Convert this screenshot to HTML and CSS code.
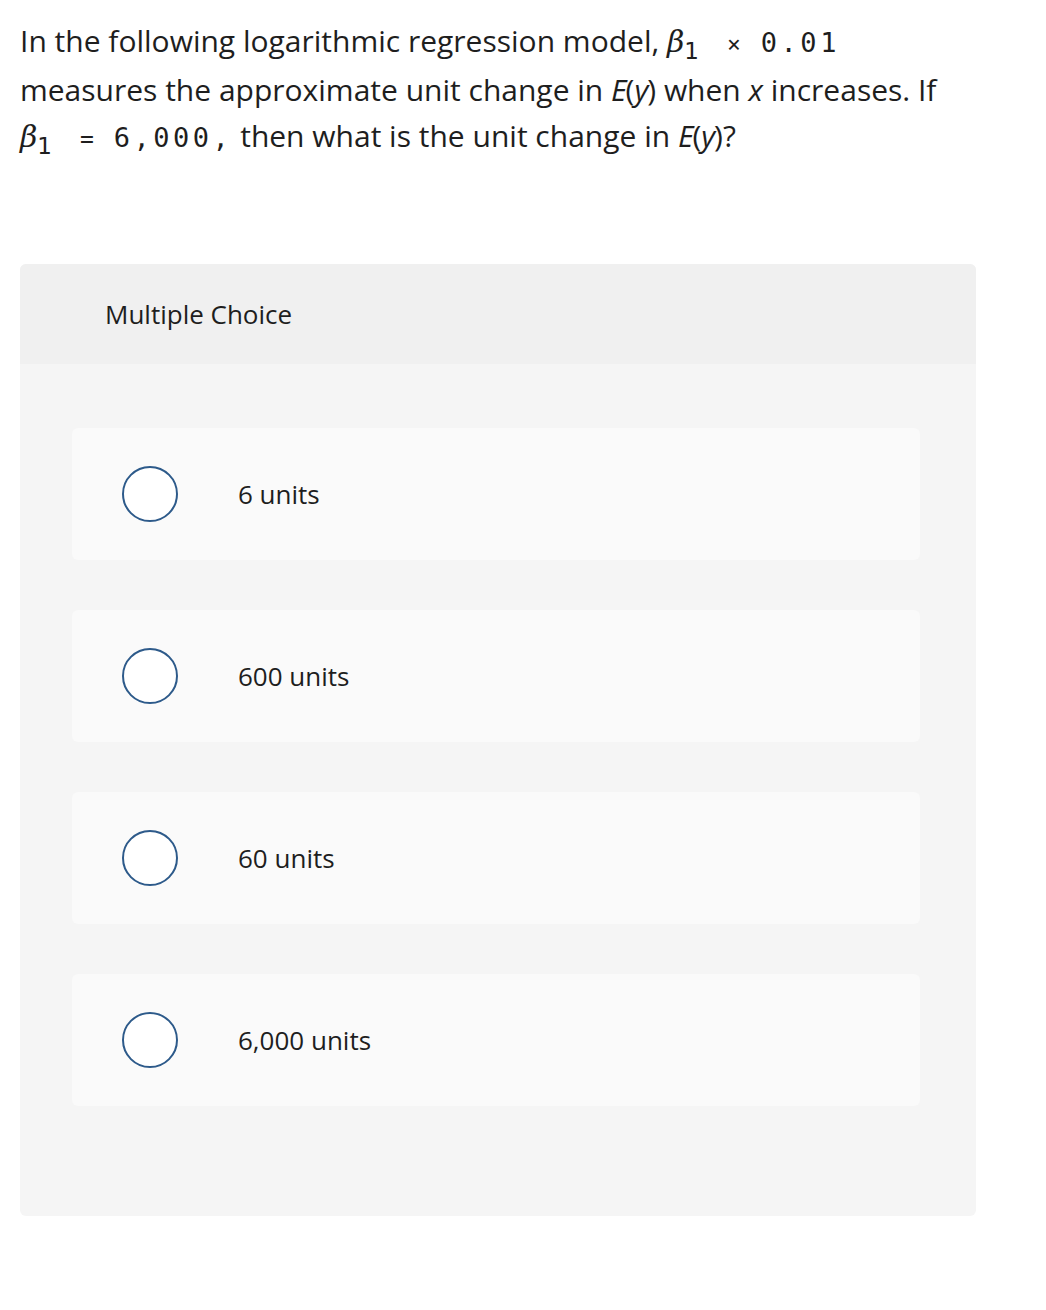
FILE: index.html
```html
<!DOCTYPE html>
<html>
<head>
<meta charset="utf-8">
<link rel="stylesheet" href="styles.css">
</head>
<body>
<div class="page">
  <p class="question">In the following logarithmic regression model, <span class="beta">β<sub>1</sub></span><span class="mono op">×</span><span class="mono">0.01</span><br>measures the approximate unit change in <i class="ey">E</i>(<i class="ey">y</i>) when <i>x</i> increases. If<br><span class="beta">β<sub>1</sub></span><span class="mono op">=</span><span class="mono">6,000,</span> then what is the unit change in <i class="ey">E</i>(<i class="ey">y</i>)?</p>
  <div class="panel">
    <div class="panel-head">Multiple Choice</div>
    <div class="panel-body">
      <div class="option"><span class="radio"></span><span class="label">6 units</span></div>
      <div class="option"><span class="radio"></span><span class="label">600 units</span></div>
      <div class="option"><span class="radio"></span><span class="label">60 units</span></div>
      <div class="option"><span class="radio"></span><span class="label">6,000 units</span></div>
    </div>
  </div>
</div>
</body>
</html>
```
FILE: styles.css
```css
html, body {
  margin: 0;
  padding: 0;
  background: #ffffff;
}
body {
  font-family: "Open Sans", "Lato", sans-serif;
  color: #1e1e1e;
}
.page {
  padding: 18px 70px 0 20px;
}
.question {
  margin: 0;
  font-size: 30px;
  line-height: 46px;
  white-space: nowrap;
}
.beta {
  font-family: "DejaVu Serif", serif;
  font-style: italic;
  font-size: 30px;
}
.beta sub {
  font-family: "DejaVu Sans", sans-serif;
  font-style: normal;
  font-size: 23px;
  vertical-align: -7px;
  line-height: 0;
}
.mono {
  font-family: "DejaVu Sans Mono", monospace;
  font-size: 27px;
  letter-spacing: 3.5px;
}
.op {
  font-size: 23px;
  letter-spacing: 0;
  margin: 0 20px 0 28px;
}
.ey {
  margin-right: -1px;
}
.panel {
  margin-top: 102px;
  width: 956px;
  background: #f5f5f5;
  border-radius: 6px;
  overflow: hidden;
}
.panel-head {
  background: #f0f0f0;
  height: 100px;
  display: flex;
  align-items: center;
  padding-left: 85px;
  font-size: 26px;
  color: #1e1e1e;
}
.panel-body {
  padding: 64px 56px 110px 52px;
  display: flex;
  flex-direction: column;
  gap: 50px;
}
.option {
  height: 132px;
  background: #fafafa;
  border-radius: 6px;
  display: flex;
  align-items: center;
  padding-left: 50px;
}
.radio {
  width: 52px;
  height: 52px;
  border: 2px solid #2d5a8a;
  border-radius: 50%;
  background: #ffffff;
  flex: none;
}
.label {
  margin-left: 60px;
  font-size: 26px;
  color: #1e1e1e;
}
```
